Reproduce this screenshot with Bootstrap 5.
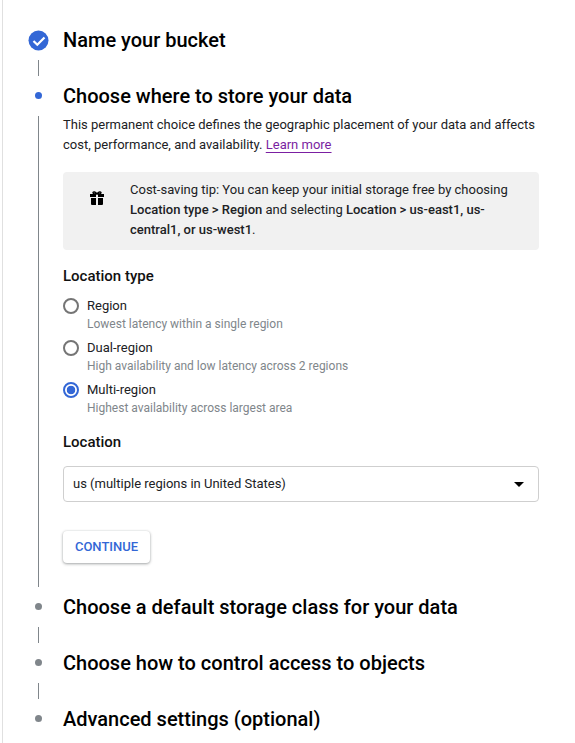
<!DOCTYPE html>
<html lang="en">
<head>
    <meta charset="UTF-8">
    <meta name="viewport" content="width=device-width, initial-scale=1.0">
    <title>Create a bucket</title>
    <link href="https://cdn.jsdelivr.net/npm/bootstrap@5.3.2/dist/css/bootstrap.min.css" rel="stylesheet">
    <style>
        body {
            font-family: Roboto, "Liberation Sans", sans-serif;
            color: #202124;
            background: #fff;
        }
        .page-frame {
            height: 743px;
            overflow: hidden;
            margin-left: 2px;
            padding: 24px 36px 0 25px;
            border-left: 1px solid #e0e0e0;
        }
        .rail {
            flex: 0 0 21px;
            width: 21px;
            margin-right: 14px;
        }
        .step-title {
            height: 32px;
            font-size: 20px;
            font-weight: 500;
            line-height: 32px;
            color: #000;
        }
        .step-dot {
            width: 7px;
            height: 7px;
            margin-top: -1px;
            border-radius: 50%;
            background: #80868b;
        }
        .step-dot-active {
            background: #3367d6;
        }
        .rail-line {
            width: 1px;
            background: #80868b;
        }
        .gap-row {
            height: 24px;
            padding: 4px 0;
        }
        .body-row {
            padding: 4px 0;
        }
        .step-body {
            font-size: 13px;
            line-height: 20px;
            margin-top: -1px;
        }
        .intro-text {
            margin-bottom: 17px;
        }
        .learn-link {
            color: #7b1fa2;
            text-underline-offset: 3px;
        }
        .tip-box {
            height: 78px;
            padding: 8px 24px 0 0;
            margin-bottom: 16px;
            background: #f1f1f1;
            border-radius: 4px;
        }
        .tip-icon {
            flex: 0 0 67px;
            padding-top: 11px;
        }
        .tip-box b, .field-title {
            font-weight: 500;
        }
        .field-title {
            font-size: 15px;
            line-height: 20px;
            color: #111;
        }
        .title-type {
            margin-bottom: 10px;
        }
        .title-location {
            margin-top: 10px;
            margin-bottom: 14px;
        }
        .radio-row {
            height: 42px;
        }
        .radio-row .form-check-input {
            flex: 0 0 16px;
            width: 16px;
            height: 16px;
            margin: 2px 8px 0 0;
            background-color: #fff;
            background-image: none;
            border: 2px solid #757575;
        }
        .radio-row .form-check-input:checked {
            border-color: #3367d6;
            background-color: #fff;
            background-image: radial-gradient(circle, #3367d6 0, #3367d6 4px, #fff 4.6px);
        }
        .radio-label {
            font-size: 13px;
            line-height: 20px;
            margin: 0;
            color: #202124;
        }
        .radio-hint {
            font-size: 12px;
            line-height: 16px;
            color: #80868b;
        }
        .location-select.form-select {
            height: 36px;
            padding: 0 36px 0 9px;
            font-size: 13px;
            color: #202124;
            border-color: #cfcfcf;
            border-radius: 4px;
            background-image: url("data:image/svg+xml,%3csvg xmlns='http://www.w3.org/2000/svg' viewBox='0 0 10 5'%3e%3cpath d='M0 0h10L5 5z' fill='%23000'/%3e%3c/svg%3e");
            background-position: right 14px center;
            background-size: 10px 5px;
        }
        .continue-btn.btn {
            width: 87px;
            height: 32px;
            padding: 0;
            margin-top: 29px;
            margin-bottom: 24px;
            font-size: 13px;
            font-weight: 500;
            color: #3367d6;
            background: #fff;
            border: 0;
            border-radius: 4px;
            box-shadow: 0 1px 3px rgba(60, 64, 67, .45), 0 0 2px rgba(60, 64, 67, .12);
        }
    </style>
</head>
<body>
<div class="page-frame">
    <div class="d-flex align-items-center step-title">
        <div class="rail d-flex justify-content-center">
            <svg width="21" height="21" viewBox="0 0 21 21" aria-hidden="true">
                <circle cx="10.5" cy="10.5" r="10" fill="#3367d6"/>
                <path d="M5.500 11l3.800 3.800 7.200-7.400" fill="none" stroke="#fff" stroke-width="2.200"/>
            </svg>
        </div>
        <div>Name your bucket</div>
    </div>
    <div class="d-flex gap-row">
        <div class="rail d-flex justify-content-center"><div class="rail-line"></div></div>
    </div>

    <div class="d-flex align-items-center step-title">
        <div class="rail d-flex justify-content-center"><div class="step-dot step-dot-active"></div></div>
        <div>Choose where to store your data</div>
    </div>
    <div class="d-flex body-row">
        <div class="rail d-flex justify-content-center"><div class="rail-line"></div></div>
        <div class="flex-grow-1 step-body">
            <p class="intro-text">This permanent choice defines the geographic placement of your data and affects cost, performance, and availability. <a href="#" class="learn-link">Learn more</a></p>

            <div class="tip-box d-flex">
                <div class="tip-icon d-flex justify-content-center">
                    <svg width="14" height="14" viewBox="0 0 14 14" aria-hidden="true">
                        <path fill="#000" d="M0 3h6v3H0zM8 3h6v3H8zM1 7h5v7H2a1 1 0 0 1-1-1zM8 7h5v6a1 1 0 0 1-1 1H8z"/>
                        <path fill="none" stroke="#000" stroke-width="1.4" d="M7 3C5.500 .6 3 .4 3 1.800 3 3 5 3 7 3zM7 3C8.500 .6 11 .4 11 1.800 11 3 9 3 7 3z"/>
                    </svg>
                </div>
                <div>Cost-saving tip: You can keep your initial storage free by choosing <b>Location type &gt; Region</b> and selecting <b>Location &gt; us-east1, us-central1, or us-west1</b>.</div>
            </div>

            <div class="field-title title-type">Location type</div>
            <div class="radio-row d-flex">
                <input class="form-check-input" type="radio" name="locationType" id="typeRegion">
                <div>
                    <label class="radio-label d-block" for="typeRegion">Region</label>
                    <div class="radio-hint">Lowest latency within a single region</div>
                </div>
            </div>
            <div class="radio-row d-flex">
                <input class="form-check-input" type="radio" name="locationType" id="typeDual">
                <div>
                    <label class="radio-label d-block" for="typeDual">Dual-region</label>
                    <div class="radio-hint">High availability and low latency across 2 regions</div>
                </div>
            </div>
            <div class="radio-row d-flex">
                <input class="form-check-input" type="radio" name="locationType" id="typeMulti" checked>
                <div>
                    <label class="radio-label d-block" for="typeMulti">Multi-region</label>
                    <div class="radio-hint">Highest availability across largest area</div>
                </div>
            </div>

            <div class="field-title title-location">Location</div>
            <select class="form-select location-select">
                <option>us (multiple regions in United States)</option>
            </select>
            <button type="button" class="btn continue-btn d-block">CONTINUE</button>
        </div>
    </div>

    <div class="d-flex align-items-center step-title">
        <div class="rail d-flex justify-content-center"><div class="step-dot"></div></div>
        <div>Choose a default storage class for your data</div>
    </div>
    <div class="d-flex gap-row">
        <div class="rail d-flex justify-content-center"><div class="rail-line"></div></div>
    </div>
    <div class="d-flex align-items-center step-title">
        <div class="rail d-flex justify-content-center"><div class="step-dot"></div></div>
        <div>Choose how to control access to objects</div>
    </div>
    <div class="d-flex gap-row">
        <div class="rail d-flex justify-content-center"><div class="rail-line"></div></div>
    </div>
    <div class="d-flex align-items-center step-title">
        <div class="rail d-flex justify-content-center"><div class="step-dot"></div></div>
        <div>Advanced settings (optional)</div>
    </div>
</div>
<script src="https://cdn.jsdelivr.net/npm/bootstrap@5.3.2/dist/js/bootstrap.bundle.min.js"></script>
</body>
</html>
